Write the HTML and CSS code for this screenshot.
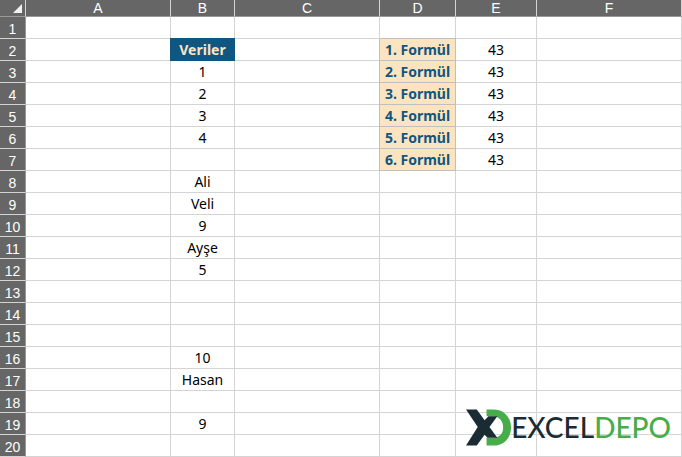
FILE: index.html
```
<!DOCTYPE html>
<html lang="tr">
<head>
    <meta charset="UTF-8">
    <meta name="viewport" content="width=device-width, initial-scale=1.0">
    <title>Excel Depo</title>
    <link rel="stylesheet" href="styles.css">
</head>
<body>
    <div class="sheet">
        <table class="grid">
            <colgroup>
                <col class="col-num">
                <col class="col-wide">
                <col class="col-data">
                <col class="col-wide">
                <col class="col-label">
                <col class="col-result">
                <col class="col-wide">
            </colgroup>
            <thead>
                <tr>
                    <td class="corner"><svg class="corner-icon" width="9" height="9" viewBox="0 0 9 9" aria-hidden="true"><path d="M9 0V9H0Z" fill="#f2f2f2"/></svg></td>
                    <th scope="col">A</th>
                    <th scope="col">B</th>
                    <th scope="col">C</th>
                    <th scope="col">D</th>
                    <th scope="col">E</th>
                    <th scope="col">F</th>
                </tr>
            </thead>
            <tbody>
                <tr><th scope="row">1</th><td></td><td></td><td></td><td></td><td></td><td></td></tr>
                <tr><th scope="row">2</th><td></td><td class="title">Veriler</td><td></td><td class="label">1. Formül</td><td>43</td><td></td></tr>
                <tr><th scope="row">3</th><td></td><td>1</td><td></td><td class="label">2. Formül</td><td>43</td><td></td></tr>
                <tr><th scope="row">4</th><td></td><td>2</td><td></td><td class="label">3. Formül</td><td>43</td><td></td></tr>
                <tr><th scope="row">5</th><td></td><td>3</td><td></td><td class="label">4. Formül</td><td>43</td><td></td></tr>
                <tr><th scope="row">6</th><td></td><td>4</td><td></td><td class="label">5. Formül</td><td>43</td><td></td></tr>
                <tr><th scope="row">7</th><td></td><td></td><td></td><td class="label">6. Formül</td><td>43</td><td></td></tr>
                <tr><th scope="row">8</th><td></td><td>Ali</td><td></td><td></td><td></td><td></td></tr>
                <tr><th scope="row">9</th><td></td><td>Veli</td><td></td><td></td><td></td><td></td></tr>
                <tr><th scope="row">10</th><td></td><td>9</td><td></td><td></td><td></td><td></td></tr>
                <tr><th scope="row">11</th><td></td><td>Ayşe</td><td></td><td></td><td></td><td></td></tr>
                <tr><th scope="row">12</th><td></td><td>5</td><td></td><td></td><td></td><td></td></tr>
                <tr><th scope="row">13</th><td></td><td></td><td></td><td></td><td></td><td></td></tr>
                <tr><th scope="row">14</th><td></td><td></td><td></td><td></td><td></td><td></td></tr>
                <tr><th scope="row">15</th><td></td><td></td><td></td><td></td><td></td><td></td></tr>
                <tr><th scope="row">16</th><td></td><td>10</td><td></td><td></td><td></td><td></td></tr>
                <tr><th scope="row">17</th><td></td><td>Hasan</td><td></td><td></td><td></td><td></td></tr>
                <tr><th scope="row">18</th><td></td><td></td><td></td><td></td><td></td><td></td></tr>
                <tr><th scope="row">19</th><td></td><td>9</td><td></td><td></td><td></td><td></td></tr>
                <tr><th scope="row">20</th><td></td><td></td><td></td><td></td><td></td><td></td></tr>
            </tbody>
        </table>

        <!-- Logo -->
        <div class="logo">
            <svg class="logo-mark" width="45" height="37" viewBox="0 0 46 37" aria-hidden="true">
                <path d="M21 0H28C39 0 46 8 46 18.500S39 37 28 37H21V29H27C34 29 38 25 38 18.500S34 7 27 7H21Z" fill="#47ad49"/>
                <path d="M0 0H11L19 11L23 7H32L24 18L32 29H22L19 26L11 37H0L12 18Z" fill="#1b2b34"/>
            </svg>
            <span class="logo-text">EXCEL<span class="logo-green">DEPO</span></span>
        </div>
    </div>
</body>
</html>
```

FILE: styles.css
```
* {
    margin: 0;
    padding: 0;
    box-sizing: border-box;
}
body {
    font-family: "Noto Sans", "Open Sans", sans-serif;
    font-size: 14px;
    background-color: white;
    color: black;
}
.sheet {
    position: relative;
}
.grid {
    width: 100%;
    table-layout: fixed;
    border-collapse: separate;
    border-spacing: 0;
}
.col-num {
    width: 26px;
}
.col-wide {
    width: 145px;
}
.col-data {
    width: 64px;
}
.col-label {
    width: 76px;
}
.col-result {
    width: 81px;
}
.grid th, .grid td {
    height: 22px;
    line-height: 21px;
    text-align: center;
    white-space: nowrap;
    border-right: 1px solid #d4d4d4;
    border-bottom: 1px solid #d4d4d4;
}
.grid th, .grid .corner {
    background-color: #666666;
    color: white;
    font-family: "Liberation Sans", Arial, sans-serif;
    font-size: 14px;
    font-weight: normal;
}
.grid thead th, .grid .corner {
    height: 17px;
    line-height: 16px;
    border-bottom-color: #999999;
}
.grid tbody th {
    height: 22px;
    line-height: 17px;
    padding-top: 4px;
    border-right-color: #999999;
}
.grid .corner {
    text-align: right;
    padding-right: 3px;
}
.corner-icon {
    display: block;
    margin-left: auto;
}
.grid .title {
    background-color: #0f5680;
    color: #fde4c0;
    font-weight: bold;
    border-color: #0f5680;
    /* covers the grid lines above and to the left */
    box-shadow: -1px 0 #0f5680, 0 -1px #0f5680, -1px -1px #0f5680;
}
.grid .label {
    background-color: #fde4c0;
    color: #0f5680;
    font-weight: bold;
    border-color: #bfbfbf;
    box-shadow: -1px 0 #bfbfbf, 0 -1px #bfbfbf;
}
.logo {
    position: absolute;
    right: 11px;
    bottom: 11px;
    display: flex;
    align-items: center;
}
.logo-text {
    font-family: Lato, sans-serif;
    font-size: 28px;
    font-weight: 500;
    line-height: 37px;
    color: #1b2b34;
}
.logo-green {
    color: #47ad49;
}
```
